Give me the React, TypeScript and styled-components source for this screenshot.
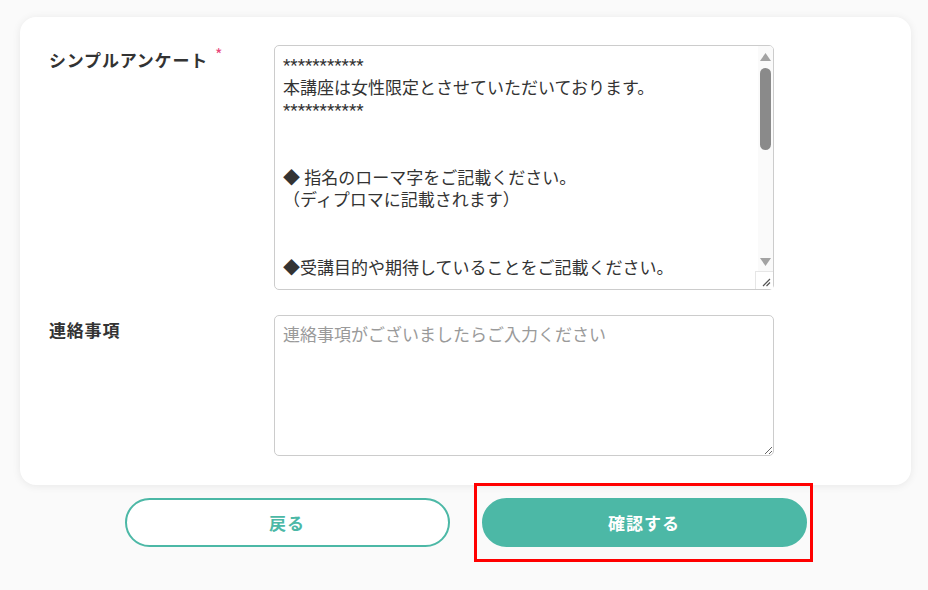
import { useState } from "react";
import styled, { createGlobalStyle } from "styled-components";

const GlobalStyle = createGlobalStyle`
  html, body {
    margin: 0;
    padding: 0;
    background: #fafafa;
  }
  body {
    font-family: "Noto Sans CJK JP", "Noto Sans", sans-serif;
    color: #333;
  }
`;

const Page = styled.main`
  padding: 17px 17px 40px 20px;
`;

const Card = styled.section`
  background: #fff;
  border-radius: 16px;
  box-shadow: 0 1px 8px rgba(0, 0, 0, 0.08);
  padding: 28px 137px 29px 29px;
  display: flex;
  flex-direction: column;
  gap: 25px;
`;

const Row = styled.div`
  display: grid;
  grid-template-columns: 225px 500px;
  align-items: start;
`;

const Label = styled.label`
  font-size: 17px;
  font-weight: 700;
  letter-spacing: 0.8px;
  line-height: 24px;
  margin-top: 3px;
  color: #333;
  white-space: nowrap;
`;

const Required = styled.span`
  color: #e8457a;
  font-size: 16px;
  font-weight: 400;
  margin-left: 7px;
  position: relative;
  top: -6px;
`;

const Field = styled.div`
  position: relative;
  width: 500px;
`;

const TextArea = styled.textarea<{ $height: number; $scroll?: boolean }>`
  box-sizing: border-box;
  width: 500px;
  height: ${(p) => p.$height}px;
  border: 1px solid #ccc;
  border-radius: 5px;
  padding: 8px ${(p) => (p.$scroll ? 23 : 8)}px 8px 8px;
  font-family: Roboto, "Noto Sans CJK JP", sans-serif;
  font-size: 17px;
  line-height: 22.5px;
  color: #333;
  background: #fff;
  outline: none;
  margin: 0;
  display: block;
  overflow: hidden;
  scrollbar-width: none;

  &::placeholder {
    color: #9a9a9a;
  }
`;

/* classic scrollbar drawn over the survey box */
const ScrollTrack = styled.div`
  position: absolute;
  top: 1px;
  right: 1px;
  bottom: 1px;
  width: 15px;
  background: #fafafa;
  display: flex;
  flex-direction: column;
  border-top-right-radius: 4px;
  pointer-events: none;
`;

const ArrowButton = styled.div<{ $h: number }>`
  height: ${(p) => p.$h}px;
  flex-shrink: 0;
  display: flex;
  align-items: center;
  justify-content: center;

  svg {
    flex-shrink: 0;
    display: block;
  }
`;

const TrackBody = styled.div`
  flex: 1;
  padding: 1px 0 0 2px;
`;

const Thumb = styled.div`
  width: 11px;
  height: 82px;
  border-radius: 5.5px;
  background: #8a8a8a;
`;

const Corner = styled.div`
  height: 18px;
  flex-shrink: 0;
  box-sizing: border-box;
  border-top: 1px solid #e6e6e6;
  border-left: 1px solid #e6e6e6;
  margin-left: -3px;
  width: 18px;
  background: #fff;
  display: flex;
  align-items: flex-end;
  justify-content: flex-end;
  padding: 0 2px 2px 0;
`;

const Actions = styled.div`
  display: flex;
  justify-content: center;
  gap: 32px;
  padding-top: 13px;
`;

const Button = styled.button<{ $primary?: boolean }>`
  width: 325px;
  height: 49px;
  border-radius: 999px;
  border: 2px solid #4cb8a6;
  background: ${(p) => (p.$primary ? "#4cb8a6" : "#fff")};
  color: ${(p) => (p.$primary ? "#fff" : "#4cb8a6")};
  font-family: "Noto Sans CJK JP", "Noto Sans", sans-serif;
  font-size: 17px;
  font-weight: 700;
  letter-spacing: 1px;
  cursor: pointer;
  display: block;
`;

const Highlight = styled.div`
  position: relative;
`;

const HighlightFrame = styled.span`
  position: absolute;
  left: -8px;
  right: -6px;
  top: -15px;
  bottom: -15px;
  border: 3px solid #f00;
  pointer-events: none;
`;

const Grip = () => (
  <svg width="9" height="9" viewBox="0 0 9 9">
    <path d="M1 8 L8 1 M4.5 8 L8 4.5" stroke="#555" strokeWidth="1.2" />
  </svg>
);

const surveyText = `***********
本講座は女性限定とさせていただいております。
***********


◆ 指名のローマ字をご記載ください。
（ディプロマに記載されます）


◆受講目的や期待していることをご記載ください。



◆ 受講にあたってのご質問があればご記載ください。



◆ 当講座をどちらでお知りになりましたか。



***********
ご回答ありがとうございました。
***********`;

export default function App() {
  const [survey, setSurvey] = useState(surveyText);
  const [note, setNote] = useState("");

  return (
    <>
      <GlobalStyle />
      <Page>
        <Card>
          <Row>
            <Label>
              シンプルアンケート<Required>*</Required>
            </Label>
            <Field>
              <TextArea
                $height={245}
                $scroll
                value={survey}
                onChange={(e) => setSurvey(e.target.value)}
              />
              <ScrollTrack>
                <ArrowButton $h={21}>
                  <svg width="11" height="8" viewBox="0 0 11 8">
                    <path d="M5.5 0 L11 8 L0 8 Z" fill="#a3a3a3" />
                  </svg>
                </ArrowButton>
                <TrackBody>
                  <Thumb />
                </TrackBody>
                <ArrowButton $h={18}>
                  <svg width="11" height="8" viewBox="0 0 11 8">
                    <path d="M0 0 L11 0 L5.5 8 Z" fill="#a3a3a3" />
                  </svg>
                </ArrowButton>
                <Corner>
                  <Grip />
                </Corner>
              </ScrollTrack>
            </Field>
          </Row>
          <Row>
            <Label>連絡事項</Label>
            <TextArea
              $height={141}
              value={note}
              placeholder="連絡事項がございましたらご入力ください"
              onChange={(e) => setNote(e.target.value)}
            />
          </Row>
        </Card>
        <Actions>
          <Button>戻る</Button>
          <Highlight>
            <Button $primary>確認する</Button>
            <HighlightFrame />
          </Highlight>
        </Actions>
      </Page>
    </>
  );
}
